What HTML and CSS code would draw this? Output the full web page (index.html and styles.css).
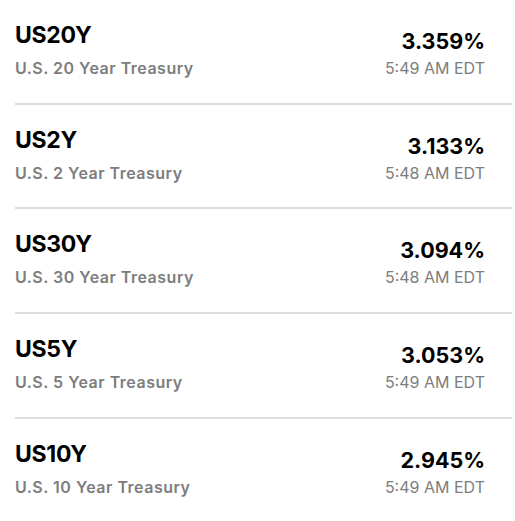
FILE: index.html
```html
<!DOCTYPE html>
<html>
<head>
<meta charset="utf-8">
<link rel="stylesheet" href="styles.css">
</head>
<body>
<div class="list">
  <div class="row">
    <div class="left"><div class="sym">US20Y</div><div class="name">U.S. 20 Year Treasury</div></div>
    <div class="right"><div class="val">3.359%</div><div class="time">5:49 AM EDT</div></div>
  </div>
  <div class="row">
    <div class="left"><div class="sym">US2Y</div><div class="name">U.S. 2 Year Treasury</div></div>
    <div class="right"><div class="val">3.133%</div><div class="time">5:48 AM EDT</div></div>
  </div>
  <div class="row">
    <div class="left"><div class="sym">US30Y</div><div class="name">U.S. 30 Year Treasury</div></div>
    <div class="right"><div class="val">3.094%</div><div class="time">5:48 AM EDT</div></div>
  </div>
  <div class="row">
    <div class="left"><div class="sym">US5Y</div><div class="name">U.S. 5 Year Treasury</div></div>
    <div class="right"><div class="val">3.053%</div><div class="time">5:49 AM EDT</div></div>
  </div>
  <div class="row last">
    <div class="left"><div class="sym">US10Y</div><div class="name">U.S. 10 Year Treasury</div></div>
    <div class="right"><div class="val">2.945%</div><div class="time">5:49 AM EDT</div></div>
  </div>
</div>
</body>
</html>
```
FILE: styles.css
```css
html, body {
  margin: 0;
  padding: 0;
  background: #ffffff;
}
body {
  font-family: "Inter", "Liberation Sans", sans-serif;
}
.list {
  display: flex;
  flex-direction: column;
  margin: 0 3px 0 15px;
}
.row {
  display: flex;
  justify-content: space-between;
  box-sizing: border-box;
  height: 104.7px;
  padding-top: 21px;
  border-bottom: 2px solid #dcdcdc;
}
.row.last {
  border-bottom: none;
}
.left {
  display: flex;
  flex-direction: column;
}
.sym {
  font-size: 23px;
  line-height: 28px;
  font-weight: 700;
  color: #000;
  letter-spacing: -0.3px;
}
.name {
  font-size: 16px;
  line-height: 20px;
  margin-top: 9px;
  font-weight: 600;
  color: #7d7d7d;
  letter-spacing: 0.5px;
}
.right {
  display: flex;
  flex-direction: column;
  align-items: flex-end;
  padding-right: 27px;
  padding-top: 7px;
}
.val {
  font-size: 21.5px;
  line-height: 26px;
  font-weight: 700;
  color: #000;
}
.time {
  font-size: 16px;
  line-height: 20px;
  color: #7d7d7d;
  margin-top: 4px;
}
```
